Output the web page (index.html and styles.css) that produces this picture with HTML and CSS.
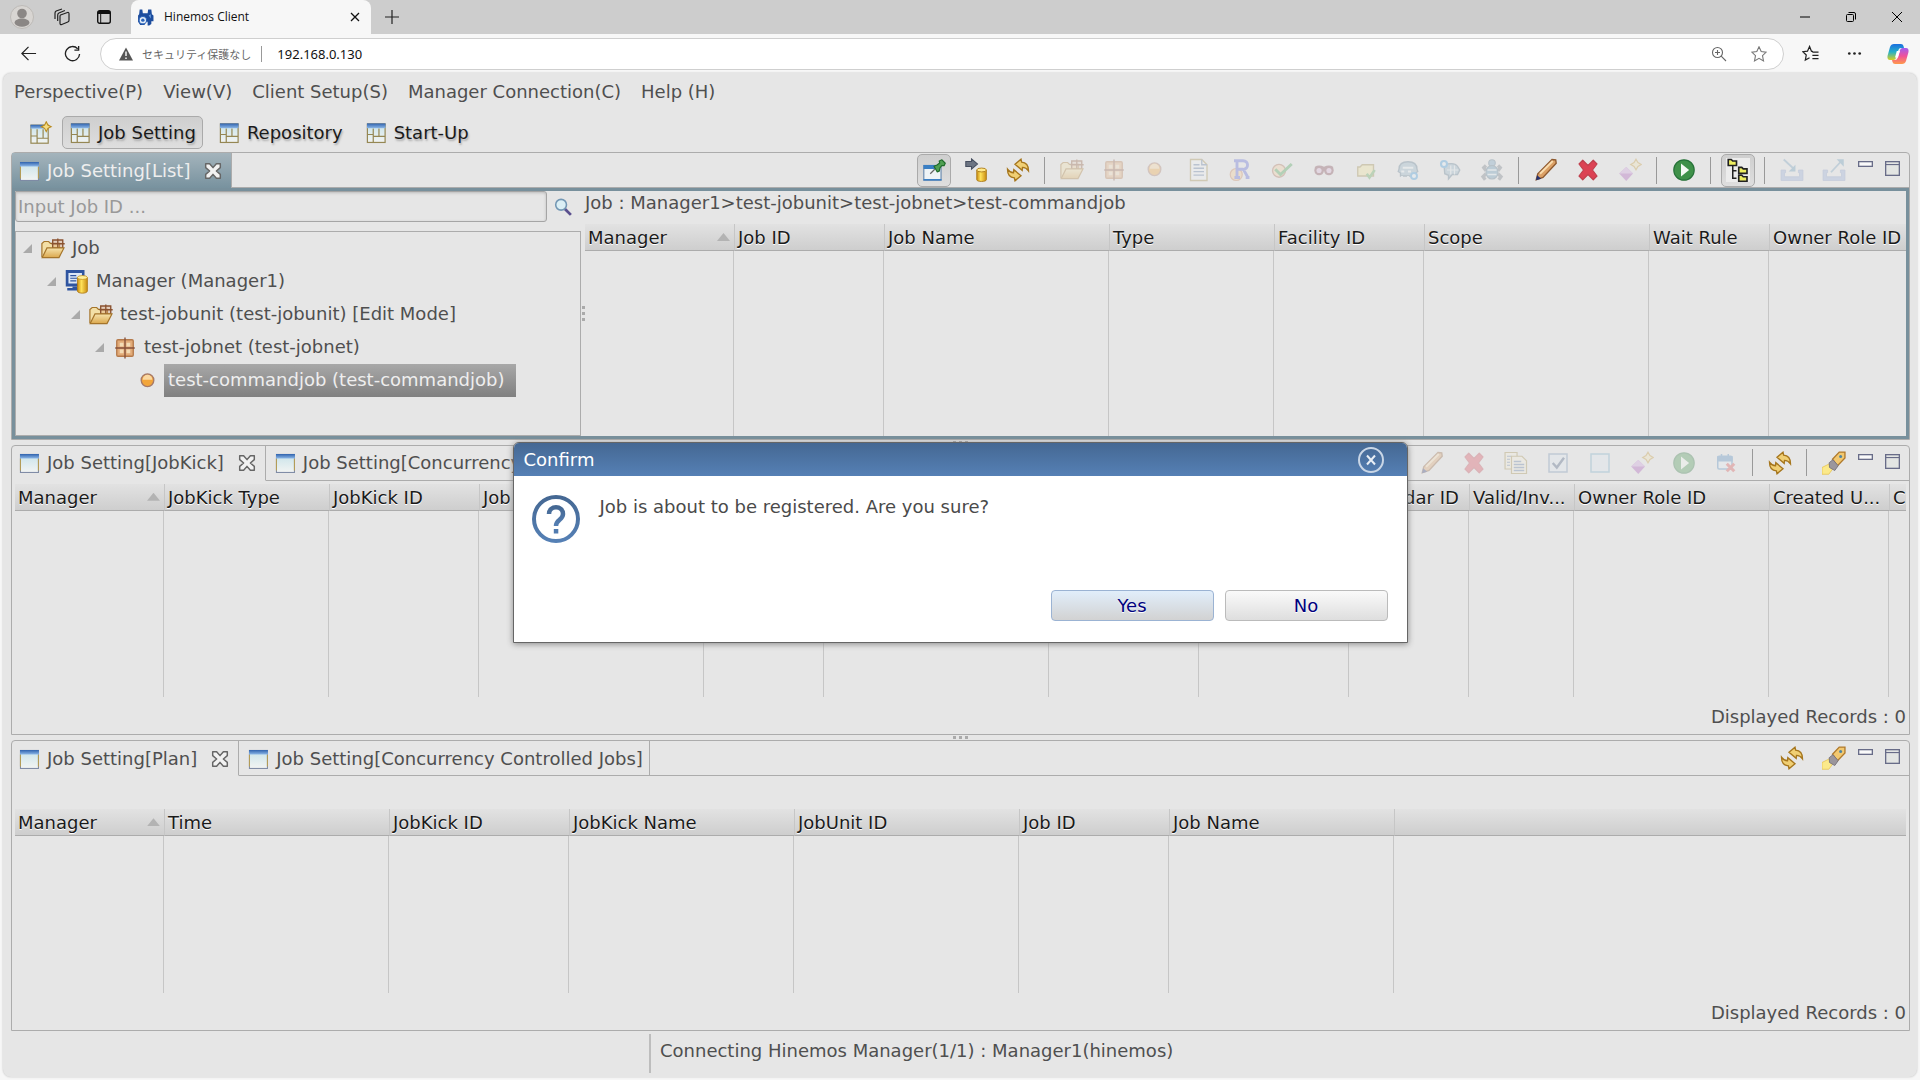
FILE: index.html
```
<!DOCTYPE html>
<html lang="en">
<head>
    <meta charset="UTF-8">
    <meta name="viewport" content="width=device-width, initial-scale=1.0">
    <title>Hinemos Client</title>
    <link rel="stylesheet" href="styles.css">
</head>
<body>
    <!-- Icon set -->
    <svg class="icon-defs" aria-hidden="true">
        <defs>
            <linearGradient id="gBlue" x1="0" y1="0" x2="0" y2="1"><stop offset="0" stop-color="#2f62ad"/><stop offset="1" stop-color="#8db8e8"/></linearGradient>
            <linearGradient id="gPane" x1="0" y1="0" x2="0" y2="1"><stop offset="0" stop-color="#c9e3ea"/><stop offset="1" stop-color="#f2f4f2"/></linearGradient>
            <linearGradient id="gGold" x1="0" y1="0" x2="1" y2="0"><stop offset="0" stop-color="#c98d12"/><stop offset="0.4" stop-color="#ffe25a"/><stop offset="1" stop-color="#c98d12"/></linearGradient>
            <linearGradient id="gFolder" x1="0" y1="0" x2="0" y2="1"><stop offset="0" stop-color="#f6e3ac"/><stop offset="1" stop-color="#dba84e"/></linearGradient>
            <linearGradient id="gQuestion" x1="0" y1="0" x2="0" y2="1"><stop offset="0" stop-color="#456893"/><stop offset="1" stop-color="#5580b5"/></linearGradient>
            <linearGradient id="gCopA" x1="0" y1="0" x2="0" y2="1"><stop offset="0" stop-color="#1a6fe0"/><stop offset="0.5" stop-color="#25b0c8"/><stop offset="1" stop-color="#d8d020"/></linearGradient>
            <linearGradient id="gCopB" x1="0" y1="0" x2="0" y2="1"><stop offset="0" stop-color="#a05cf0"/><stop offset="0.5" stop-color="#f0509a"/><stop offset="1" stop-color="#ff9a4a"/></linearGradient>
        </defs>

        <symbol id="view" viewBox="0 0 16 16">
            <rect x="2.300" y="2.300" width="12" height="12" fill="url(#gPane)" stroke="#7d8aa4" stroke-width=".7"/>
            <path d="M2.300 5v8M14.300 5v8" stroke="#b59d55" stroke-width=".7"/>
            <rect x="2" y="2" width="12.600" height="3" fill="url(#gBlue)"/>
        </symbol>
        <symbol id="perspective" viewBox="0 0 16 16">
            <rect x="1.600" y="2" width="11.800" height="12.300" fill="url(#gPane)" stroke="#958753" stroke-width=".8"/>
            <path d="M5.500 5v9.300M1.600 9h4M5.500 10.200h7.900M9.300 5v5.200" fill="none" stroke="#958753" stroke-width=".8"/>
            <rect x="1.300" y="1.600" width="12.400" height="3.200" fill="url(#gBlue)"/>
        </symbol>
        <symbol id="open-perspective" viewBox="0 0 16 16">
            <rect x="1.300" y="2.800" width="11.500" height="12" fill="url(#gPane)" stroke="#958753" stroke-width=".8"/>
            <path d="M5.400 5.500v9.300M1.300 10h4M5.400 11.500h7.400M9.400 5.500v6" fill="none" stroke="#958753" stroke-width=".8"/>
            <rect x="1" y="2.500" width="9" height="2.600" fill="url(#gBlue)"/>
            <path d="M11.500.5l1.100 2.200 2.200 1.100-2.200 1.100-1.100 2.200-1.100-2.200-2.200-1.100 2.200-1.100z" fill="#f5dc82" stroke="#b98a1e" stroke-width=".7"/>
        </symbol>
        <symbol id="folder" viewBox="0 0 16 16">
            <path d="M.6 13V4.300l1.500-1.300h3l1.200 1.300h6V13z" fill="#f3dfa6" stroke="#a5752b" stroke-width=".8"/>
            <path d="M7.800 2h6.700v5.400H7.800zM7 4.500h8.800M11.200 1v7" fill="#dba88066" stroke="#8a5230" stroke-width=".9"/>
            <path d="M.8 13.700L4 7.300h11.300l-3.300 6.400z" fill="url(#gFolder)" stroke="#a5752b" stroke-width=".8"/>
        </symbol>
        <symbol id="jobnet" viewBox="0 0 16 16">
            <rect x="2.500" y="2.500" width="11" height="11" rx=".8" fill="#e2ab78" stroke="#b57a4b" stroke-width=".9"/>
            <path d="M4.500 4.500h2.500v2.500H4.500zM9 4.500h2.500v2.500H9zM4.500 9h2.500v2.500H4.500zM9 9h2.500v2.500H9z" fill="#f3dcb6"/>
            <path d="M8 1v14M1.500 8h13" stroke="#86503a" stroke-width=".9"/>
        </symbol>
        <symbol id="job" viewBox="0 0 16 16">
            <circle cx="7" cy="7.500" r="4.200" fill="#f2a53a" stroke="#a87a66" stroke-width=".9"/>
            <path d="M3.800 7.100a3.200 3.200 0 0 1 6.400 0z" fill="#fbd8a0"/>
        </symbol>
        <symbol id="manager" viewBox="0 0 16 16">
            <path d="M.5 0h12.500v11H.5z" fill="#2e54a0"/>
            <path d="M2.300 2h9v7h-9z" fill="#dbe6f6"/>
            <path d="M3.500 3.800h4M3.500 5.500h5M3.500 7.200h4" stroke="#2e54a0" stroke-width=".8"/>
            <path d="M5 11h3v1.500H5zM1.500 12h7v1.700h-7z" fill="#2e54a0"/>
            <path d="M8.300 5v9c0 1.900 6.600 1.900 6.600 0V5z" fill="url(#gGold)" stroke="#b17c16" stroke-width=".6"/>
            <ellipse cx="11.600" cy="5" rx="3.300" ry="1.300" fill="#fff09a" stroke="#c08c1c" stroke-width=".5"/>
        </symbol>
        <symbol id="pin-view" viewBox="0 0 16 16">
            <rect x="1.200" y="5" width="11.500" height="9.800" fill="#eef3f6" stroke="#6d8cb0" stroke-width=".8"/>
            <path d="M1 4.700h8v2.600H1zM1 14h12v1H1z" fill="#3a7fc4"/>
            <path d="M5.500 10.500l3-3" stroke="#666" stroke-width=".8"/>
            <path d="M8 5.500l2-.8 1.800-1.300-.3-1.400 1.800-.8 2.200 2.300-.8 1.600-1.500-.1-1.200 1.600-.5 2.200-1.400.4z" fill="#4fa052" stroke="#1f6b2b" stroke-width=".8" stroke-linejoin="round"/>
        </symbol>
        <symbol id="to-db" viewBox="0 0 16 16">
            <path d="M1.200 2.300h3.800V.6l4 3.400-4 3.400V5.600H1.200z" fill="#6c7482" stroke="#474f60" stroke-width=".7"/>
            <path d="M8.500 8v6.500c0 1.500 6.400 1.500 6.400 0V8z" fill="url(#gGold)" stroke="#ab7a18" stroke-width=".6"/>
            <ellipse cx="11.700" cy="8" rx="3.200" ry="1.300" fill="#ffe98a" stroke="#ab7a18" stroke-width=".6"/>
        </symbol>
        <symbol id="refresh" viewBox="0 0 16 16">
            <path d="M6 4.200L10 .8l.4 2c3 .2 4.600 2 4.600 5.700-1.200-1.700-2.400-2.300-4-2.300l-.2 2z" fill="#f0cf74" stroke="#a6761d" stroke-width=".9"/>
            <path d="M10 11.800L6 15.200l-.4-2c-3-.2-4.600-2-4.600-5.700 1.200 1.700 2.400 2.300 4 2.300l.2-2z" fill="#f0cf74" stroke="#a6761d" stroke-width=".9"/>
        </symbol>
        <symbol id="document" viewBox="0 0 16 16">
            <path d="M3 1h7.500L14 4.500V15H3z" fill="#f3f5f8" stroke="#a08a45" stroke-width=".9"/>
            <path d="M10.500 1v3.500H14M5 4.500h4M5 6.800h7M5 9.100h7M5 11.400h7" fill="none" stroke="#57749e" stroke-width=".9"/>
        </symbol>
        <symbol id="r-job" viewBox="0 0 16 16">
            <circle cx="5.500" cy="11" r="4" fill="#f5c98f" stroke="#c68055" stroke-width=".8"/>
            <path d="M4 1.800h6c4 0 4 5.400.3 5.800l3 5.400M6 1.800v11M4.300 13h3.700M6 7.500h4M11.800 13h2.500" fill="none" stroke="#5360d8" stroke-width="1.900"/>
        </symbol>
        <symbol id="approval" viewBox="0 0 16 16">
            <circle cx="6" cy="8.500" r="4.300" fill="#f5cf9f" stroke="#a86c50" stroke-width=".9"/>
            <path d="M3.500 7.500l3.500 3.500 7.500-7" fill="none" stroke="#3f9e4f" stroke-width="2"/>
        </symbol>
        <symbol id="monitor" viewBox="0 0 16 16">
            <path d="M2 5.800q2.500-1.500 6 0 3.500-1.500 6 0l.5 2.500q-.5 3.200-3.200 3.200Q8.600 11.500 8 8.500 7.400 11.500 4.700 11.500 2 11.500 1.500 8.300z" fill="#7a3f4c"/>
            <circle cx="4.700" cy="8.300" r="1.700" fill="#dcb6da"/>
            <circle cx="11.300" cy="8.300" r="1.700" fill="#dcb6da"/>
        </symbol>
        <symbol id="file-check" viewBox="0 0 16 16">
            <path d="M2.500 12V6h1.500l1.500-1.500H13V12z" fill="#f1e39a" stroke="#9a8540" stroke-width=".9"/>
            <path d="M8.500 10.500l1.800 2.500 3.500-5" fill="none" stroke="#5aa653" stroke-width="1.700"/>
        </symbol>
        <symbol id="car" viewBox="0 0 16 16">
            <path d="M2 7.500Q2 2.500 8 2.500t6 5l.5 1.500-1.500 1v2H3v-2L1.500 9z" fill="#8fb0c4" stroke="#55758c" stroke-width=".9"/>
            <path d="M4.500 6.500h7M3.500 9h2M8 9h2M4 12v2M8 12v1.500" stroke="#e8f0f5" stroke-width="1.200"/>
            <circle cx="12" cy="12" r="2" fill="#e6f3fb" stroke="#3897dc" stroke-width="1.300"/>
        </symbol>
        <symbol id="globe" viewBox="0 0 16 16">
            <path d="M4 4.500Q11 2.500 13 5.500L14.500 8 13 11H9.500L7 14v-2.500L4.500 10.500z" fill="#8fb0c4" stroke="#55758c" stroke-width=".9"/>
            <path d="M6 8h7.500M8.500 5v6M11 5v6" stroke="#dfe9ef" stroke-width=".8"/>
            <circle cx="4" cy="4" r="2" fill="#e6f3fb" stroke="#3897dc" stroke-width="1.400"/>
        </symbol>
        <symbol id="bug" viewBox="0 0 16 16">
            <path d="M4 5L2.500 6.500 4 8.500M12 5l1.500 1.500L12 8.500M4 10.500l-2 2L3.500 14.500M12 10.500l2 2-1.500 2" fill="none" stroke="#6b7680" stroke-width="2.200"/>
            <circle cx="8" cy="3.300" r="2.200" fill="#6f9dbd" stroke="#4f7187" stroke-width=".7"/>
            <ellipse cx="8" cy="9.500" rx="4" ry="4.500" fill="#5f93b3" stroke="#4f7187" stroke-width=".8"/>
            <path d="M5 8h6M5 11h6" stroke="#dceaf2"/>
        </symbol>
        <symbol id="pencil" viewBox="0 0 16 16">
            <path d="M1.500 14.500l1-4L12 1l2.500.3.300 2.200L6 13z" fill="#dba066" stroke="#8e5a30" stroke-width=".9"/>
            <path d="M4 10.500L12.500 2" stroke="#f9dcae" stroke-width="1.300"/>
            <path d="M1.300 14.800l.8-3.300 2.700 2.400z" fill="#24306e"/>
        </symbol>
        <symbol id="delete" viewBox="0 0 16 16">
            <path d="M2 4l2.500-2.500L8 5l3.500-3.500L14 4l-3 4 3 4-2.500 2.500L8 11l-3.500 3.500L2 12l3-4z" fill="#dc4254" stroke="#c0404e" stroke-width=".8" stroke-linejoin="round"/>
        </symbol>
        <symbol id="diamond" viewBox="0 0 16 16">
            <path d="M5.500 6l4.500 4.300-4.500 5L.8 10.300z" fill="#a552b8"/>
            <path d="M5.500 6l4.500 4.300H.8z" fill="#cf9fde"/>
            <path d="M12 .8l1.300 2.200 2.200 1.300-2.200 1.300L12 7.800l-1.300-2.200-2.200-1.300L10.700 3z" fill="#f3e4b4" stroke="#c3962f" stroke-width=".8"/>
        </symbol>
        <symbol id="run" viewBox="0 0 16 16">
            <circle cx="8" cy="8" r="6.800" fill="#3f9149" stroke="#267238" stroke-width=".8"/>
            <path d="M6 3.600L11.400 8 6 12.400z" fill="#f5faf3"/>
        </symbol>
        <symbol id="tree" viewBox="0 0 16 16">
            <path d="M0 0h16v16H0z" fill="#ececec"/>
            <path d="M4.500 5v8.500H7M4.500 8.500H7" fill="none" stroke="#222" stroke-width="1"/>
            <path d="M1.500 1h2l1 1h2.500v3H1.500zM8.500 6.200h2l1 1h2.500v3h-5.500zM8.500 11.500h2l1 1h2.500v3h-5.500z" fill="#eeee60" stroke="#222" stroke-width="1.100"/>
        </symbol>
        <symbol id="import" viewBox="0 0 16 16">
            <path d="M.7 8h3v1.800H3v2.700h10V9.800h-.7V8h3v7H.7z" fill="#91a8d6" stroke="#7d94c4" stroke-width=".5"/>
            <path d="M2.500 1l6.500 6" stroke="#6d9bbc" stroke-width="1.200"/><path d="M10.300 4.500V9H5.800z" fill="#5e94b8"/>
        </symbol>
        <symbol id="export" viewBox="0 0 16 16">
            <path d="M.7 8h3v1.800H3v2.700h10V9.800h-.7V8h3v7H.7z" fill="#91a8d6" stroke="#7d94c4" stroke-width=".5"/>
            <path d="M6 9.500l6.500-7" stroke="#6d9bbc" stroke-width="1.200"/><path d="M14.500.8v5L9.800.8z" fill="#5e94b8"/>
        </symbol>
        <symbol id="copy" viewBox="0 0 16 16">
            <path d="M.7 1h8v11h-8z" fill="#f5efdb" stroke="#a08a45" stroke-width=".8"/>
            <path d="M2 3.500h3M2 5.500h2M2 7.500h2M2 9.500h2" stroke="#57749e" stroke-width=".8"/>
            <path d="M5 3.500h7l3 3v8.500H5z" fill="#f5efdb" stroke="#a08a45" stroke-width=".8"/>
            <path d="M6.500 7h5M6.500 9h7M6.500 11h7M6.500 13h7" stroke="#57749e" stroke-width=".9"/>
        </symbol>
        <symbol id="checked" viewBox="0 0 16 16">
            <rect x="2" y="2" width="12" height="12" fill="#dde9f2" stroke="#6e8cae"/>
            <path d="M4.500 8l2.700 3L12 4.500" fill="none" stroke="#3c5378" stroke-width="1.600"/>
        </symbol>
        <symbol id="unchecked" viewBox="0 0 16 16">
            <rect x="2" y="2" width="12" height="12" fill="#dde9f2" stroke="#6ea7c4"/>
        </symbol>
        <symbol id="calendar-x" viewBox="0 0 16 16">
            <rect x="2.500" y="3.500" width="9.500" height="8.500" rx="1" fill="#e5eef6" stroke="#4a86be"/>
            <path d="M2.500 4h9.500v2.500H2.500zM5 2v2M9.500 2v2" fill="#4a86be" stroke="#4a86be"/>
            <path d="M8.500 8.500l5 5M13.500 8.500l-5 5" stroke="#d84a4a" stroke-width="2"/>
        </symbol>
        <symbol id="rocket" viewBox="0 0 16 16">
            <path d="M0 15.500V11l5-2.500 2.500 3-3 4z" fill="#fbe98a" stroke="#e6c04e" stroke-width=".5"/>
            <path d="M7 5.500L11.500.7h3.800v4L10.200 9.900z" fill="#f2c870" stroke="#b07a2c" stroke-width=".9"/>
            <path d="M4.800 7.800l2.500-2 3.500 4-2.300 3.200-3.500-2z" fill="#9b969c" stroke="#76727c" stroke-width=".6"/>
            <circle cx="12.400" cy="3.600" r="1" fill="#4f86a3"/>
        </symbol>
        <symbol id="minimize" viewBox="0 0 16 16">
            <rect x=".7" y=".7" width="14.600" height="5" fill="#fafafa" stroke="#686c88" stroke-width="1.400"/>
        </symbol>
        <symbol id="maximize" viewBox="0 0 16 16">
            <rect x=".7" y=".7" width="14.600" height="14.600" fill="#e3e5e3" stroke="#686c88" stroke-width="1.400"/>
            <path d="M1 3.800h14" stroke="#686c88" stroke-width="1.200"/>
        </symbol>
        <symbol id="search" viewBox="0 0 16 16">
            <path d="M9.500 9.500l5.500 5.500" stroke="#5a4f8e" stroke-width="2.500"/>
            <circle cx="6.300" cy="6" r="4.800" fill="#dbeff5" stroke="#7397b4" stroke-width="1.400"/>
        </symbol>
        <symbol id="close-tab" viewBox="0 0 16 16">
            <path d="M1.500 1.500H5l3 3.500 3-3.500h3.500V5L11 8l3.500 3v3.500H11L8 11l-3 3.500H1.500V11L5 8 1.500 5z" fill="#f2f2f2" stroke="#666" stroke-width="1.300" stroke-linejoin="round"/>
        </symbol>
    </svg>

    <!-- Browser frame -->
    <header class="browser">
        <div class="titlebar">
            <svg class="avatar" viewBox="0 0 24 24"><circle cx="12" cy="12" r="11.500" fill="#d8d5d2" stroke="#bdbab7"/><circle cx="12" cy="8.500" r="4.800" fill="#8b8785"/><path d="M4.500 18c0-6 15-6 15 0-2 5-13 5-15 0z" fill="#8b8785"/></svg>
            <svg class="title-icon" viewBox="0 0 18 18" fill="none" stroke="#222" stroke-width="1.200"><path d="M7.500 7l7-2.500q1.500-.4 1.500 1.200v6.500q0 1.300-1.200 1.800l-6 2.500q-1.800.6-1.800-1.200V8.500q0-1.200.5-1.500zM4.700 13V7q0-1.300 1.200-2l6-2.500M2 11V5q0-1.300 1.200-2L9 1"/></svg>
            <svg class="title-icon tab-actions" viewBox="0 0 16 16"><rect x="1.700" y="1.700" width="12.600" height="12.600" rx="2" fill="none" stroke="#111" stroke-width="1.400"/><path d="M2 2h12v3H2z" fill="#111"/><path d="M4.700 4v10" stroke="#111"/></svg>
            <div class="browser-tab">
                <svg class="favicon" viewBox="0 0 16 16"><path d="M2.500.5h2.500L5.500 4h4.500l.5-3.500h3L14 5l1.500 1v5.500h-2V14l-2 1.500h-1.500V12H8.500L7 15H3L1 12V6l1-1z" fill="#1d4d9e"/><path d="M11 6l2-1v4z" fill="#6da0e0"/><circle cx="5.500" cy="10.500" r="3.500" fill="#e3edf8" stroke="#2b63b8"/><circle cx="5.500" cy="10.500" r="1.600" fill="#2b63b8"/></svg>
                <span class="tab-title">Hinemos Client</span>
                <button class="frame-button" aria-label="Close tab"><svg viewBox="0 0 10 10"><path d="M1 1l8 8M9 1L1 9" stroke="#111" stroke-width="1.300"/></svg></button>
            </div>
            <button class="frame-button new-tab" aria-label="New tab"><svg viewBox="0 0 14 14"><path d="M7 0v14M0 7h14" stroke="#222" stroke-width="1.200"/></svg></button>
            <div class="window-buttons">
                <button class="frame-button" aria-label="Minimize"><svg viewBox="0 0 10 10"><path d="M0 5h10" stroke="#000"/></svg></button>
                <button class="frame-button" aria-label="Restore"><svg viewBox="0 0 10 10" fill="none" stroke="#000"><rect x=".5" y="2.500" width="7" height="7" rx="1"/><path d="M2.500.5H8Q9.500.5 9.500 2v5.500"/></svg></button>
                <button class="frame-button" aria-label="Close"><svg viewBox="0 0 10 10"><path d="M0 0l10 10M10 0L0 10" stroke="#000"/></svg></button>
            </div>
        </div>
        <div class="navbar">
            <button class="nav-button" aria-label="Back"><svg viewBox="0 0 18 18" fill="none" stroke="#222" stroke-width="1.300"><path d="M17 9H2M9 2L2 9l7 7"/></svg></button>
            <button class="nav-button" aria-label="Reload"><svg viewBox="0 0 18 18" fill="none" stroke="#222" stroke-width="1.400"><path d="M16.500 9.500A7.500 7.500 0 1 1 14.500 4M15.500 1v4.500H11"/></svg></button>
            <div class="address">
                <svg class="warn" viewBox="0 0 14 14"><path d="M7 .5L14 13.500H0z" fill="#555"/><path d="M7 4.500v4.500M7 10.500v1.500" stroke="#fff" stroke-width="1.400"/></svg>
                <span class="insecure">セキュリティ保護なし</span>
                <input class="url" type="text" value="192.168.0.130" aria-label="Address">
                <svg class="address-icon" viewBox="0 0 16 16" fill="none" stroke="#666" stroke-width="1.100"><circle cx="6.500" cy="6.500" r="5"/><path d="M10.200 10.200L15 15M6.500 4v5M4 6.500h5"/></svg>
                <svg class="address-icon" viewBox="0 0 16 16" fill="none" stroke="#777" stroke-width="1.100"><path d="M8 .8l2.200 4.700 5 .6-3.700 3.500 1 5.300L8 12.300l-4.500 2.600 1-5.300L.8 6.100l5-.6z"/></svg>
            </div>
            <button class="nav-button" aria-label="Favorites"><svg viewBox="0 0 18 18" fill="none" stroke="#222" stroke-width="1.300"><path d="M11.500 7L10 6.500 8 1.500 5.800 6.500l-5 .6 3.700 3.500-1 5.300L8 13.500M11 7.500h6.500M11 11h6.500M11 14.500h6.500"/></svg></button>
            <button class="nav-button" aria-label="More"><svg viewBox="0 0 18 18" fill="#222"><circle cx="3.500" cy="9" r="1.400"/><circle cx="9" cy="9" r="1.400"/><circle cx="14.500" cy="9" r="1.400"/></svg></button>
            <button class="nav-button copilot" aria-label="Copilot"><svg viewBox="0 0 22 22"><path d="M7 1h7q2 0 2.500 2l.5 2h-3q-2 0-2.600 2L9 15q-.7 2-2.500 2H3q-3 0-2.500-4L3 4q1-3 4-3z" fill="url(#gCopA)"/><path d="M15 21H8q-2 0-2.500-2L5 17h3q2 0 2.600-2L13 7q.7-2 2.500-2H19q3 0 2.500 4L19 18q-1 3-4 3z" fill="url(#gCopB)"/><path d="M9.800 8h3.200l-2 6.500H8z" fill="#fff"/></svg></button>
        </div>
    </header>

    <main class="client">
        <nav class="menu">
            <a href="#">Perspective(P)</a>
            <a href="#">View(V)</a>
            <a href="#">Client Setup(S)</a>
            <a href="#">Manager Connection(C)</a>
            <a href="#">Help (H)</a>
        </nav>

        <div class="perspectives">
            <button aria-label="Open Perspective"><svg class="icon"><use href="#open-perspective"/></svg></button>
            <button class="pressed"><svg class="icon"><use href="#perspective"/></svg>Job Setting</button>
            <button><svg class="icon"><use href="#perspective"/></svg>Repository</button>
            <button><svg class="icon"><use href="#perspective"/></svg>Start-Up</button>
        </div>

        <!-- Job Setting[List] -->
        <section class="panel focused">
            <div class="tabs">
                <div class="tab current"><svg class="icon"><use href="#view"/></svg>Job Setting[List]<button class="close" aria-label="Close"><svg><use href="#close-tab"/></svg></button></div>
                <div class="toolbar">
                    <button class="pressed" aria-label="Link view"><svg class="icon"><use href="#pin-view"/></svg></button>
                    <button aria-label="Register"><svg class="icon"><use href="#to-db"/></svg></button>
                    <button aria-label="Refresh"><svg class="icon"><use href="#refresh"/></svg></button>
                    <span class="separator"></span>
                    <button disabled aria-label="Create job unit"><svg class="icon"><use href="#folder"/></svg></button>
                    <button disabled aria-label="Create jobnet"><svg class="icon"><use href="#jobnet"/></svg></button>
                    <button disabled aria-label="Create command job"><svg class="icon"><use href="#job"/></svg></button>
                    <button disabled aria-label="Create file transfer job"><svg class="icon"><use href="#document"/></svg></button>
                    <button disabled aria-label="Create reference job"><svg class="icon"><use href="#r-job"/></svg></button>
                    <button disabled aria-label="Create approval job"><svg class="icon"><use href="#approval"/></svg></button>
                    <button disabled aria-label="Create monitor job"><svg class="icon"><use href="#monitor"/></svg></button>
                    <button disabled aria-label="Create file check job"><svg class="icon"><use href="#file-check"/></svg></button>
                    <button disabled aria-label="Create job link send job"><svg class="icon"><use href="#car"/></svg></button>
                    <button disabled aria-label="Create job link receive job"><svg class="icon"><use href="#globe"/></svg></button>
                    <button disabled aria-label="Create RPA job"><svg class="icon"><use href="#bug"/></svg></button>
                    <span class="separator"></span>
                    <button aria-label="Modify"><svg class="icon"><use href="#pencil"/></svg></button>
                    <button aria-label="Delete"><svg class="icon"><use href="#delete"/></svg></button>
                    <button disabled aria-label="Object privilege"><svg class="icon"><use href="#diamond"/></svg></button>
                    <span class="separator"></span>
                    <button aria-label="Run"><svg class="icon"><use href="#run"/></svg></button>
                    <span class="separator"></span>
                    <button class="pressed" aria-label="Edit mode"><svg class="icon"><use href="#tree"/></svg></button>
                    <span class="separator"></span>
                    <button disabled aria-label="Import"><svg class="icon"><use href="#import"/></svg></button>
                    <button disabled aria-label="Export"><svg class="icon"><use href="#export"/></svg></button>
                </div>
                <div class="view-buttons">
                    <button aria-label="Minimize"><svg><use href="#minimize"/></svg></button>
                    <button aria-label="Maximize"><svg><use href="#maximize"/></svg></button>
                </div>
            </div>
            <div class="panel-body split">
                <div class="tree-pane">
                    <div class="search-row">
                        <input class="job-search" type="text" placeholder="Input Job ID ..." aria-label="Job ID">
                        <button aria-label="Search"><svg class="search-icon"><use href="#search"/></svg></button>
                    </div>
                    <ul class="tree">
                        <li>
                            <div class="node"><span class="arrow"></span><svg class="icon"><use href="#folder"/></svg><span class="label">Job</span></div>
                            <ul>
                                <li>
                                    <div class="node"><span class="arrow"></span><svg class="icon"><use href="#manager"/></svg><span class="label">Manager (Manager1)</span></div>
                                    <ul>
                                        <li>
                                            <div class="node"><span class="arrow"></span><svg class="icon"><use href="#folder"/></svg><span class="label">test-jobunit (test-jobunit) [Edit Mode]</span></div>
                                            <ul>
                                                <li>
                                                    <div class="node"><span class="arrow"></span><svg class="icon"><use href="#jobnet"/></svg><span class="label">test-jobnet (test-jobnet)</span></div>
                                                    <ul>
                                                        <li>
                                                            <div class="node leaf"><svg class="icon"><use href="#job"/></svg><span class="label selected">test-commandjob (test-commandjob)</span></div>
                                                        </li>
                                                    </ul>
                                                </li>
                                            </ul>
                                        </li>
                                    </ul>
                                </li>
                            </ul>
                        </li>
                    </ul>
                </div>
                <div class="sash vertical"><i></i><i></i><i></i></div>
                <div class="table-pane">
                    <p class="path">Job : Manager1&gt;test-jobunit&gt;test-jobnet&gt;test-commandjob</p>
                    <div class="table-box">
                        <table>
                            <colgroup><col class="w149"><col class="w150"><col class="w225"><col class="w165"><col class="w150"><col class="w225"><col class="w120"><col></colgroup>
                            <thead>
                                <tr><th class="sorted">Manager</th><th>Job ID</th><th>Job Name</th><th>Type</th><th>Facility ID</th><th>Scope</th><th>Wait Rule</th><th>Owner Role ID</th></tr>
                            </thead>
                            <tbody>
                                <tr><td></td><td></td><td></td><td></td><td></td><td></td><td></td><td></td></tr>
                            </tbody>
                        </table>
                    </div>
                </div>
            </div>
        </section>

        <div class="sash"><i></i><i></i><i></i></div>

        <!-- Job Setting[JobKick] -->
        <section class="panel">
            <div class="tabs">
                <div class="tab current"><svg class="icon"><use href="#view"/></svg>Job Setting[JobKick]<button class="close" aria-label="Close"><svg><use href="#close-tab"/></svg></button></div>
                <div class="tab"><svg class="icon"><use href="#view"/></svg>Job Setting[Concurrency]</div>
                <div class="toolbar">
                    <button disabled aria-label="Modify"><svg class="icon"><use href="#pencil"/></svg></button>
                    <button disabled aria-label="Delete"><svg class="icon"><use href="#delete"/></svg></button>
                    <button disabled aria-label="Copy"><svg class="icon"><use href="#copy"/></svg></button>
                    <button disabled aria-label="Enable"><svg class="icon"><use href="#checked"/></svg></button>
                    <button disabled aria-label="Disable"><svg class="icon"><use href="#unchecked"/></svg></button>
                    <button disabled aria-label="Object privilege"><svg class="icon"><use href="#diamond"/></svg></button>
                    <button disabled aria-label="Run"><svg class="icon"><use href="#run"/></svg></button>
                    <button disabled aria-label="Delete schedule"><svg class="icon"><use href="#calendar-x"/></svg></button>
                    <span class="separator"></span>
                    <button aria-label="Refresh"><svg class="icon"><use href="#refresh"/></svg></button>
                    <span class="separator"></span>
                    <button aria-label="Filter"><svg class="icon"><use href="#rocket"/></svg></button>
                </div>
                <div class="view-buttons">
                    <button aria-label="Minimize"><svg><use href="#minimize"/></svg></button>
                    <button aria-label="Maximize"><svg><use href="#maximize"/></svg></button>
                </div>
            </div>
            <div class="panel-body">
                <div class="table-box">
                    <table>
                        <colgroup><col class="w149"><col class="w165"><col class="w150"><col class="w225"><col class="w120"><col class="w225"><col class="w150"><col class="w150"><col class="w120"><col class="w105"><col class="w195"><col class="w120"><col></colgroup>
                        <thead>
                            <tr><th class="sorted">Manager</th><th>JobKick Type</th><th>JobKick ID</th><th>Job</th><th></th><th></th><th></th><th></th><th>Calendar ID</th><th>Valid/Inv...</th><th>Owner Role ID</th><th>Created U...</th><th>C</th></tr>
                        </thead>
                        <tbody>
                            <tr><td></td><td></td><td></td><td></td><td></td><td></td><td></td><td></td><td></td><td></td><td></td><td></td><td></td></tr>
                        </tbody>
                    </table>
                </div>
                <p class="records">Displayed Records : 0</p>
            </div>
        </section>

        <div class="sash"><i></i><i></i><i></i></div>

        <!-- Job Setting[Plan] -->
        <section class="panel">
            <div class="tabs">
                <div class="tab current"><svg class="icon"><use href="#view"/></svg>Job Setting[Plan]<button class="close" aria-label="Close"><svg><use href="#close-tab"/></svg></button></div>
                <div class="tab"><svg class="icon"><use href="#view"/></svg>Job Setting[Concurrency Controlled Jobs]</div>
                <div class="toolbar">
                    <button aria-label="Refresh"><svg class="icon"><use href="#refresh"/></svg></button>
                    <button aria-label="Filter"><svg class="icon"><use href="#rocket"/></svg></button>
                </div>
                <div class="view-buttons">
                    <button aria-label="Minimize"><svg><use href="#minimize"/></svg></button>
                    <button aria-label="Maximize"><svg><use href="#maximize"/></svg></button>
                </div>
            </div>
            <div class="panel-body plan">
                <div class="table-box">
                    <table>
                        <colgroup><col class="w149"><col class="w225"><col class="w180"><col class="w225"><col class="w225"><col class="w150"><col class="w225"><col></colgroup>
                        <thead>
                            <tr><th class="sorted">Manager</th><th>Time</th><th>JobKick ID</th><th>JobKick Name</th><th>JobUnit ID</th><th>Job ID</th><th>Job Name</th><th></th></tr>
                        </thead>
                        <tbody>
                            <tr><td></td><td></td><td></td><td></td><td></td><td></td><td></td><td></td></tr>
                        </tbody>
                    </table>
                </div>
                <p class="records">Displayed Records : 0</p>
            </div>
        </section>

        <footer class="status"><span>Connecting Hinemos Manager(1/1) : Manager1(hinemos)</span></footer>
    </main>

    <!-- Confirm dialog -->
    <dialog class="confirm" open aria-labelledby="confirmTitle">
        <div class="confirm-title">
            <span id="confirmTitle">Confirm</span>
            <button aria-label="Close"><svg viewBox="0 0 26 26" fill="none" stroke="#c9d6e6" stroke-width="2"><circle cx="13" cy="13" r="12"/><path d="M9 8.500l8 9M17 8.500l-8 9" stroke="#e8eef5"/></svg></button>
        </div>
        <div class="confirm-body">
            <svg class="question" viewBox="0 0 48 48" fill="none" stroke="url(#gQuestion)"><circle cx="24" cy="24" r="22" stroke-width="4"/><path d="M17 19c0-9 14-9 14 0 0 6-7 5.500-7 12" stroke-width="4.500"/><path d="M21.800 34h4.500v4.500h-4.500z" fill="#507bb0" stroke="none"/></svg>
            <p>Job is about to be registered. Are you sure?</p>
        </div>
        <div class="confirm-buttons">
            <button class="default">Yes</button>
            <button>No</button>
        </div>
    </dialog>
</body>
</html>
```

FILE: styles.css
```
* {
    box-sizing: border-box;
}

body, html {
    margin: 0;
    padding: 0;
    height: 100%;
    overflow: hidden;
}

body {
    display: flex;
    flex-direction: column;
    background: #f7f7f7;
    color: #4f4f4f;
    font-family: "DejaVu Sans", sans-serif;
    font-size: 18px;
    line-height: 24px;
}

button {
    display: flex;
    align-items: center;
    justify-content: center;
    padding: 0;
    border: none;
    background: none;
    color: inherit;
    font: inherit;
    flex: none;
}

svg {
    display: block;
    flex: none;
}

p, ul {
    margin: 0;
    padding: 0;
    list-style: none;
}

.icon-defs {
    position: absolute;
    width: 0;
    height: 0;
}

.icon {
    width: 24px;
    height: 24px;
}

/* Browser frame */
.browser {
    font-family: "Open Sans", "Noto Sans CJK JP", sans-serif;
    font-size: 12px;
    color: #111;
}

.titlebar {
    display: flex;
    align-items: center;
    height: 34px;
    padding-left: 10px;
    background: #cdcdcd;
}

.avatar {
    width: 24px;
    height: 24px;
}

.title-icon {
    width: 18px;
    height: 18px;
    margin-left: 19px;
}

.tab-actions {
    width: 16px;
    height: 16px;
    margin: 0 19px 0 25px;
}

.browser-tab {
    display: flex;
    align-items: center;
    align-self: stretch;
    width: 240px;
    padding: 0 6px;
    border-radius: 8px 8px 0 0;
    background: #f7f7f7;
}

.favicon {
    width: 17px;
    height: 17px;
}

.tab-title {
    flex: 1;
    padding-left: 10px;
}

.frame-button {
    width: 20px;
    height: 20px;
}

.frame-button svg {
    width: 10px;
    height: 10px;
}

.new-tab {
    margin-left: 11px;
}

.new-tab svg {
    width: 14px;
    height: 14px;
}

.window-buttons {
    display: flex;
    align-self: stretch;
    margin-left: auto;
}

.window-buttons .frame-button {
    width: 46px;
    height: 34px;
}

.navbar {
    display: flex;
    align-items: center;
    gap: 8px;
    height: 39px;
    padding: 0 4px 0 10px;
}

.nav-button {
    width: 36px;
    height: 32px;
}

.nav-button svg {
    width: 17px;
    height: 17px;
}

.nav-button.copilot svg {
    width: 22px;
    height: 24px;
}

.address {
    display: flex;
    align-items: center;
    flex: 1;
    height: 32px;
    margin-left: 2px;
    padding: 0 16px 0 18px;
    border: 1px solid #cfcfcf;
    border-radius: 16px;
    background: #fff;
}

.warn {
    width: 14px;
    height: 14px;
}

.insecure {
    margin: 0 10px 0 9px;
    font-family: "Noto Sans CJK JP", sans-serif;
    font-size: 11px;
    color: #666;
}

.url {
    flex: 1;
    height: 16px;
    padding: 0 0 0 15px;
    border: none;
    border-left: 1px solid #999;
    outline: none;
    background: none;
    color: #111;
    font-family: "Noto Sans", sans-serif;
    font-size: 13px;
}

.address-icon {
    width: 16px;
    height: 16px;
    margin-left: 24px;
}

/* Client area */
.client {
    display: flex;
    flex-direction: column;
    flex: 1;
    min-height: 0;
    margin: 0 3px 3px;
    padding: 0 7px 0 8px;
    border-radius: 8px;
    background: #e6e6e6;
    box-shadow: 0 0 2px #bbb;
}

.menu {
    display: flex;
    gap: 20px;
    padding: 7px 3px 0;
}

.menu a {
    color: inherit;
    text-decoration: none;
}

.perspectives {
    display: flex;
    align-items: center;
    gap: 8px;
    padding: 12px 0 3px 17px;
}

.perspectives button {
    gap: 5px;
    height: 33px;
    padding: 0 6px;
    border: 1px solid transparent;
    color: #1a1a1a;
    text-shadow: 1px 2px 2px #aaa;
}

.perspectives button:first-child {
    padding: 0;
}

.perspectives .pressed, .toolbar .pressed {
    border: 1px solid #aaa;
    border-radius: 5px;
    background: linear-gradient(#cfcfcf, #dedede);
}

/* Panels */
.panel {
    display: flex;
    flex-direction: column;
    flex: 291 1 0;
    min-height: 0;
    border: 1px solid #acacac;
    border-radius: 4px 4px 0 0;
}

.panel.focused {
    flex-grow: 288;
}

.tabs {
    display: flex;
    flex: none;
    height: 35px;
}

.tab {
    display: flex;
    align-items: center;
    gap: 6px;
    padding: 1px 4px 0 5px;
    border-right: 1px solid #acacac;
    border-bottom: 1px solid #acacac;
    white-space: nowrap;
}

.tab + .tab {
    padding: 1px 6px 0 7px;
}

.tab.current {
    border-bottom-color: transparent;
}

.close {
    width: 20px;
    height: 20px;
    margin: 0 4px 0 7px;
}

.close svg {
    width: 18px;
    height: 18px;
}

.focused .tab.current {
    margin-bottom: -3px;
    padding-bottom: 3px;
    border-bottom: none;
    background: linear-gradient(#a4b4bc, #748f9c);
    color: #eee;
}

.toolbar {
    display: flex;
    align-items: center;
    justify-content: flex-end;
    flex: 1;
    border-bottom: 1px solid #acacac;
}

.toolbar button {
    width: 42px;
    height: 33px;
}

.toolbar .pressed {
    width: 34px;
    margin: 0 4px;
}

.toolbar button:disabled {
    opacity: 0.3;
}

.separator {
    width: 2px;
    height: 27px;
    margin: 0 5px;
    border-left: 1px solid #999;
}

.view-buttons {
    display: flex;
    align-items: flex-start;
    gap: 12px;
    padding: 8px 9px 0 3px;
    border-bottom: 1px solid #acacac;
}

.view-buttons svg {
    width: 15px;
    height: 15px;
}

.panel-body {
    display: flex;
    flex-direction: column;
    flex: 1;
    min-height: 0;
    padding: 3px 3px 0;
}

.panel-body.plan {
    padding-top: 33px;
}

.panel-body.split {
    flex-direction: row;
    padding: 0;
    border: 3px solid #78909c;
}

.tree-pane {
    display: flex;
    flex-direction: column;
    flex: 0 0 566px;
}

.search-row {
    display: flex;
    align-items: center;
    gap: 7px;
    margin-bottom: 9px;
}

.job-search {
    width: 532px;
    height: 31px;
    padding: 0 2px;
    border: 1px solid #a5a5a5;
    border-radius: 0 3px 3px 3px;
    background: #e6e6e6;
    box-shadow: inset 0 1px 3px #bbb;
    font: inherit;
}

.job-search::placeholder {
    color: #999;
}

.search-icon {
    width: 18px;
    height: 18px;
}

/* Tree */
.tree {
    flex: 1;
    min-height: 0;
    border: 1px solid #acacac;
    padding-left: 7px;
}

.tree ul {
    padding-left: 24px;
}

.node {
    display: flex;
    align-items: center;
    height: 33px;
    white-space: nowrap;
}

.arrow {
    width: 9px;
    height: 9px;
    margin-right: 9px;
    background: #aaa;
    clip-path: polygon(100% 0, 100% 100%, 0 100%);
}

.leaf {
    padding-left: 18px;
}

.label {
    margin-left: 3px;
    padding: 0 4px 2px;
    line-height: 31px;
}

.label.selected {
    padding-right: 12px;
    background: linear-gradient(#a8a8a8, #808080);
    color: #eee;
}

/* Tables */
.table-pane {
    display: flex;
    flex-direction: column;
    flex: 1;
    min-width: 0;
}

.path {
    padding-bottom: 9px;
}

.table-box {
    flex: 1;
    min-height: 0;
    overflow: hidden;
}

table {
    width: 100%;
    height: 100%;
    table-layout: fixed;
    border-collapse: separate;
    border-spacing: 0;
}

th {
    height: 27px;
    padding: 2px 0 0 3px;
    overflow: hidden;
    border-bottom: 1px solid #acacac;
    border-left: 1px solid #c6c6c6;
    background: linear-gradient(#e2e2e2, #cecece);
    color: #1a1a1a;
    font-weight: normal;
    text-align: left;
    text-shadow: 0 1px 0 #fff;
    white-space: nowrap;
}

th:first-child {
    border-left: none;
}

.sorted::after {
    content: "";
    float: right;
    width: 13px;
    height: 8px;
    margin: 7px 4px 0 0;
    background: #b3b3b3;
    clip-path: polygon(50% 0, 100% 100%, 0 100%);
}

td {
    padding: 0;
    border-right: 1px solid #c6c6c6;
}

td:last-child {
    border-right: none;
}

.w105 { width: 105px; }
.w120 { width: 120px; }
.w149 { width: 149px; }
.w150 { width: 150px; }
.w165 { width: 165px; }
.w180 { width: 180px; }
.w195 { width: 195px; }
.w225 { width: 225px; }

.records {
    padding: 8px 0 5px;
    text-align: right;
}

/* Sashes */
.sash {
    display: flex;
    align-items: center;
    justify-content: center;
    gap: 3px;
    flex: 0 0 5px;
}

.sash.vertical {
    flex-direction: column;
    flex-basis: 4px;
}

.sash i {
    width: 3px;
    height: 3px;
    background: #aaa;
}

.status {
    display: flex;
    justify-content: flex-start;
    flex: none;
    padding: 3px 0 4px 638px;
}

.status span {
    padding: 5px 9px 10px;
    border-left: 2px solid #bdbdbd;
}

/* Confirm dialog */
.confirm {
    position: absolute;
    inset: 5px 0 0 0;
    display: flex;
    flex-direction: column;
    width: 895px;
    height: 201px;
    margin: auto;
    padding: 0;
    border: 1px solid #666;
    border-radius: 6px 6px 0 0;
    overflow: hidden;
    background: #fff;
    color: #4a4a4a;
    box-shadow: 0 1px 6px #888;
}

.confirm-title {
    display: flex;
    align-items: center;
    justify-content: space-between;
    height: 33px;
    padding: 1px 23px 0 10px;
    background: linear-gradient(#456893, #5580b5);
    color: #fff;
}

.confirm-title svg {
    width: 26px;
    height: 26px;
}

.confirm-body {
    display: flex;
    flex: 1;
    gap: 20px;
    padding: 19px 18px 0;
}

.question {
    width: 48px;
    height: 48px;
}

.confirm-buttons {
    display: flex;
    justify-content: flex-end;
    gap: 11px;
    padding: 0 19px 21px;
}

.confirm-buttons button {
    width: 163px;
    height: 31px;
    border: 1px solid #bbb;
    border-radius: 4px;
    background: linear-gradient(#fafafa, #dedede);
    color: #00007f;
    text-shadow: 0 1px 0 #fff;
}

.confirm-buttons .default {
    border-color: #9bb3d3;
    background: linear-gradient(#e1eefb, #d2d2d2);
}
```
